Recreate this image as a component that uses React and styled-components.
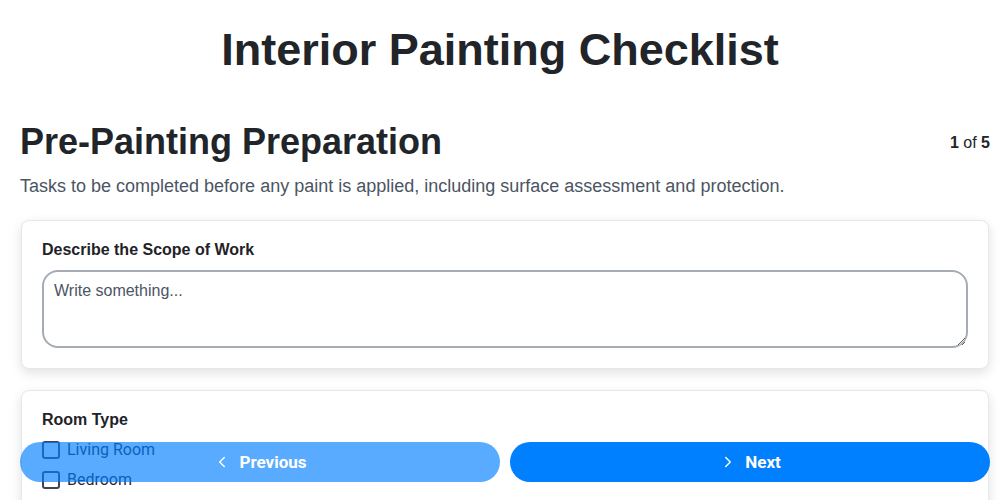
import React, { useState } from "react";
import styled, { createGlobalStyle } from "styled-components";
import { ChevronLeft, ChevronRight } from "lucide-react";

const GlobalStyle = createGlobalStyle`
  body {
    margin: 0;
    background: #fff;
    font-family: "Liberation Sans", Arial, sans-serif;
    color: #212529;
  }
`;

const Header = styled.header`
  padding: 21px 20px 0;
`;

const Page = styled.main`
  padding: 0 10px 120px 20px;
`;

const Title = styled.h1`
  margin: 0;
  font-size: 45px;
  line-height: 58px;
  font-weight: 700;
  text-align: center;
  color: #212529;
`;

const SectionHead = styled.div`
  display: flex;
  justify-content: space-between;
  align-items: center;
  margin-top: 41px;
`;

const SectionTitle = styled.h2`
  margin: 0;
  font-size: 36px;
  line-height: 43px;
  font-weight: 700;
  color: #212529;
`;

const Step = styled.div`
  font-size: 16px;
  padding-top: 2px;
  color: #212529;
  b {
    font-weight: 700;
  }
`;

const Subtitle = styled.p`
  margin: 10px 0 0;
  font-size: 18px;
  line-height: 27px;
  color: #4b5563;
`;

const Cards = styled.div`
  display: flex;
  flex-direction: column;
  gap: 21px;
  margin: 20px 1px 0;
`;

const Card = styled.div`
  background: #fff;
  border: 1px solid #e5e7eb;
  border-radius: 8px;
  box-shadow: 0 4px 12px rgba(0, 0, 0, 0.12);
  padding: 19px 20px 20px;
`;

const Label = styled.div`
  font-size: 16px;
  line-height: 20px;
  font-weight: 700;
  color: #1f2328;
  margin-bottom: ${(p) => p.$gap || 10}px;
`;

const TextArea = styled.textarea`
  display: block;
  box-sizing: border-box;
  width: 100%;
  height: 78px;
  border: 2px solid #a5acb4;
  border-radius: 16px;
  padding: 10px 10px;
  font-family: "Liberation Sans", Arial, sans-serif;
  font-size: 16px;
  color: #1f2937;
  resize: vertical;
  outline: none;
  &::placeholder {
    color: #4b5563;
  }
`;

const Options = styled.div`
  display: flex;
  flex-direction: column;
  gap: 8px;
`;

const Option = styled.label`
  display: flex;
  align-items: center;
  gap: 7px;
  font-family: Roboto, "Liberation Sans", sans-serif;
  font-size: 16px;
  line-height: 22px;
  color: #1f2937;
  cursor: pointer;
`;

const Box = styled.span`
  box-sizing: border-box;
  width: 18px;
  height: 18px;
  border: 2px solid #3f4555;
  border-radius: 3px;
  background: ${(p) => (p.$checked ? "#007fff" : "transparent")};
`;

const Footer = styled.div`
  position: fixed;
  left: 20px;
  right: 10px;
  bottom: 18px;
  display: flex;
  gap: 10px;
`;

const NavButton = styled.button`
  flex: 1;
  height: 40px;
  display: flex;
  align-items: center;
  justify-content: center;
  gap: 8px;
  border: none;
  border-radius: 20px;
  background: #007fff;
  color: #fff;
  font-family: Roboto, "Liberation Sans", sans-serif;
  font-size: 17px;
  font-weight: 700;
  cursor: pointer;
  &:disabled {
    opacity: 0.65;
    cursor: default;
  }
`;

const rooms = ["Living Room", "Bedroom", "Kitchen", "Bathroom"];

export default function App() {
  const [checked, setChecked] = useState({});

  return (
    <>
      <GlobalStyle />
      <Header>
        <Title>Interior Painting Checklist</Title>
      </Header>
      <Page>
        <SectionHead>
          <SectionTitle>Pre-Painting Preparation</SectionTitle>
          <Step>
            <b>1</b> of <b>5</b>
          </Step>
        </SectionHead>
        <Subtitle>
          Tasks to be completed before any paint is applied, including surface
          assessment and protection.
        </Subtitle>
        <Cards>
          <Card>
            <Label>Describe the Scope of Work</Label>
            <TextArea placeholder="Write something..." />
          </Card>
          <Card>
            <Label $gap={9}>Room Type</Label>
            <Options>
              {rooms.map((room) => (
                <Option
                  key={room}
                  onClick={() => setChecked({ ...checked, [room]: !checked[room] })}
                >
                  <Box $checked={checked[room]} />
                  {room}
                </Option>
              ))}
            </Options>
          </Card>
        </Cards>
      </Page>
      <Footer>
        <NavButton disabled>
          <ChevronLeft size={18} strokeWidth={2} />
          Previous
        </NavButton>
        <NavButton>
          <ChevronRight size={18} strokeWidth={2} />
          Next
        </NavButton>
      </Footer>
    </>
  );
}
